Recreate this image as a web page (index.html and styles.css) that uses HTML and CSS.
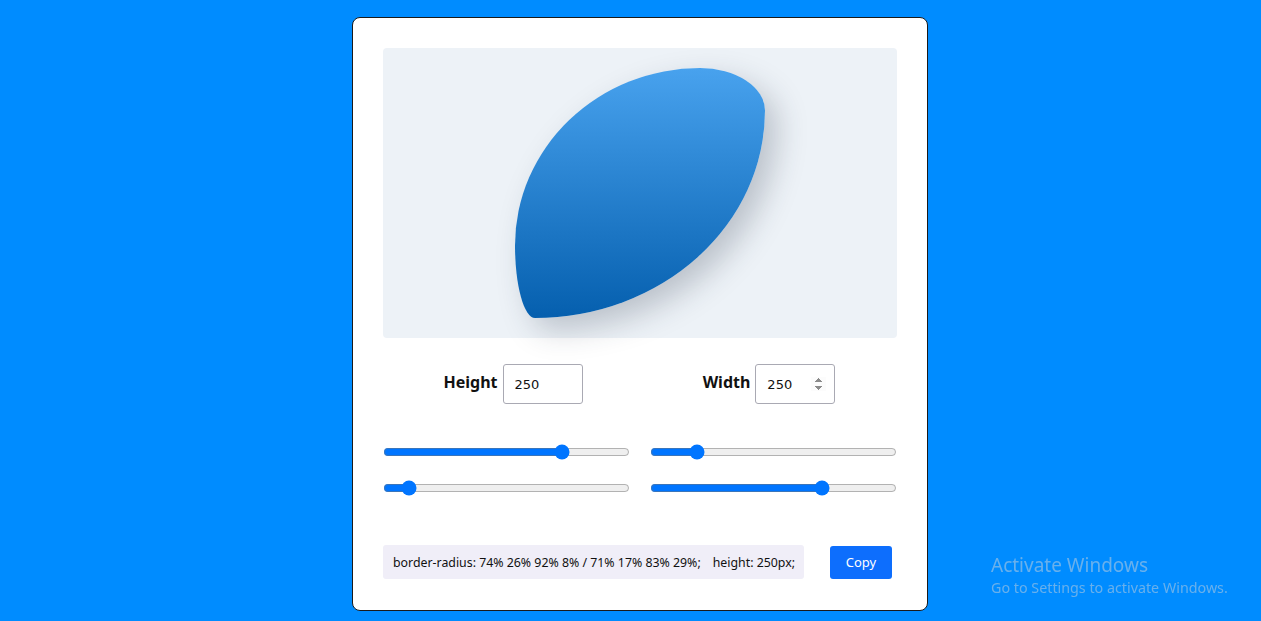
FILE: index.html
```html
<!DOCTYPE html>
<html lang="en">
<head>
<meta charset="utf-8">
<title>Fancy Border Radius</title>
<link rel="stylesheet" href="styles.css">
</head>
<body>
<div class="page">
  <div class="card">
    <div class="preview">
      <div class="blob"></div>
    </div>
    <div class="dims">
      <div class="dim">
        <label class="dim-label" for="h">Height</label>
        <input class="dim-input" id="h" type="number" value="250">
      </div>
      <div class="dim">
        <label class="dim-label" for="w">Width</label>
        <input class="dim-input dim-input--hover" id="w" type="number" value="250">
      </div>
    </div>
    <div class="sliders">
      <input class="slider" type="range" min="0" max="100" value="74">
      <input class="slider" type="range" min="0" max="100" value="17">
      <input class="slider" type="range" min="0" max="100" value="8">
      <input class="slider" type="range" min="0" max="100" value="71">
    </div>
    <div class="output">
      <div class="code"><span>border-radius: 74% 26% 92% 8% / 71% 17% 83% 29%;</span><span class="code-h">height: 250px;</span></div>
      <button class="copy">Copy</button>
    </div>
  </div>
</div>
<div class="watermark">
  <div class="wm-title">Activate Windows</div>
  <div class="wm-sub">Go to Settings to activate Windows.</div>
</div>
</body>
</html>
```
FILE: styles.css
```css
html, body {
  margin: 0;
  padding: 0;
  height: 100%;
}
body {
  background: #008cff;
  font-family: "Noto Sans", "DejaVu Sans", sans-serif;
  color: #111;
  overflow: hidden;
}
.page {
  display: flex;
  justify-content: center;
  padding: 17px 0 0 19px;
}
.card {
  background: #fff;
  border: 1px solid #1a1a1a;
  border-radius: 8px;
  padding: 30px 30px 31px;
  box-sizing: content-box;
  width: 514px;
}
.preview {
  height: 290px;
  background: #edf2f7;
  border-radius: 4px;
  display: flex;
  align-items: center;
  justify-content: center;
}
.blob {
  width: 250px;
  height: 250px;
  border-radius: 74% 26% 92% 8% / 71% 17% 83% 29%;
  background: linear-gradient(to bottom, #48a2ee, #055fae);
  box-shadow: 12px 12px 30px rgba(40, 50, 70, 0.25);
}
.dims {
  display: grid;
  grid-template-columns: 1fr 1fr;
  margin-top: 26px;
  padding-left: 2px;
}
.dim {
  display: flex;
  align-items: center;
  justify-content: center;
  gap: 5px;
}
.dim-label {
  font-weight: 700;
  font-size: 16px;
  margin-bottom: 4px;
}
.dim-input {
  width: 80px;
  height: 40px;
  box-sizing: border-box;
  border: 1px solid #a9a9b3;
  border-radius: 3px;
  padding: 0 8px 0 11px;
  font-family: "DejaVu Sans", sans-serif;
  font-size: 13px;
  color: #111;
}
.dim-input::-webkit-inner-spin-button {
  opacity: 0;
}
.dim-input--hover::-webkit-inner-spin-button {
  opacity: 1;
}
.sliders {
  display: grid;
  grid-template-columns: 1fr 1fr;
  column-gap: 20px;
  row-gap: 20px;
  margin-top: 40px;
}
.slider {
  width: auto;
  margin: 0;
  height: 16px;
}
.output {
  display: flex;
  align-items: center;
  justify-content: space-between;
  margin-top: 49px;
}
.code {
  width: 421px;
  height: 34px;
  box-sizing: border-box;
  background: #f0eef8;
  border-radius: 3px;
  padding: 0 10px;
  display: flex;
  align-items: center;
  font-size: 12.35px;
  white-space: nowrap;
}
.code-h {
  margin-left: 12px;
}
.copy {
  width: 62px;
  height: 33px;
  margin-right: 5px;
  background: #0d6efd;
  color: #fff;
  border: none;
  border-radius: 3px;
  font-family: "Noto Sans", sans-serif;
  font-size: 13px;
}
.watermark {
  position: fixed;
  left: 991px;
  top: 553px;
  color: rgba(190, 205, 220, 0.55);
  font-family: "Noto Sans", sans-serif;
}
.wm-title {
  font-size: 19px;
  line-height: 24px;
}
.wm-sub {
  font-size: 14.3px;
  line-height: 21px;
}
```
